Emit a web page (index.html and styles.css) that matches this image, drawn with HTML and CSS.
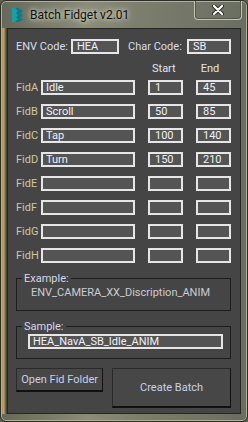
FILE: index.html
```html
<!DOCTYPE html>
<html lang="en">
<head>
  <meta charset="UTF-8">
  <title>Batch Fidget v2.01</title>
  <link rel="stylesheet" href="styles.css">
</head>
<body>
<div class="window">
  <div class="titlebar">
    <svg class="app-icon" width="11" height="14" viewBox="0 0 11 14">
      <path d="M0 0H7L11 3L8.5 5L11 7.5L8.5 9.5L11 11.5L7 14H0Z" fill="#1b9ea6"/>
      <path d="M3 0H7L11 3L8.5 5L11 7.5L8.5 9.5L11 11.5L7 14H3L6 11L4 9.5L6 7.5L4 5L6 3Z" fill="#0f7b84"/>
    </svg>
    <span class="title">Batch Fidget v2.01</span>
    <div class="close">
      <svg width="12" height="10" viewBox="0 0 12 10">
        <path d="M2 1L10 9M10 1L2 9" stroke="#2a2a22" stroke-width="4" stroke-linecap="round"/>
        <path d="M2 1L10 9M10 1L2 9" stroke="#fff" stroke-width="2.2" stroke-linecap="round"/>
      </svg>
    </div>
  </div>

  <div class="panel">
    <div class="codes">
      <span class="lbl env-lbl">ENV Code:</span>
      <div class="field env">HEA</div>
      <span class="lbl char-lbl">Char Code:</span>
      <div class="field char">SB</div>
    </div>

    <div class="heads">
      <span class="head start">Start</span>
      <span class="head end">End</span>
    </div>

    <div class="fids">
      <span class="fid">FidA</span><div class="field name">Idle</div><div class="field num">1</div><div class="field num">45</div>
      <span class="fid">FidB</span><div class="field name">Scroll</div><div class="field num">50</div><div class="field num">85</div>
      <span class="fid">FidC</span><div class="field name">Tap</div><div class="field num">100</div><div class="field num">140</div>
      <span class="fid">FidD</span><div class="field name">Turn</div><div class="field num">150</div><div class="field num">210</div>
      <span class="fid">FidE</span><div class="field name"></div><div class="field num"></div><div class="field num"></div>
      <span class="fid">FidF</span><div class="field name"></div><div class="field num"></div><div class="field num"></div>
      <span class="fid">FidG</span><div class="field name"></div><div class="field num"></div><div class="field num"></div>
      <span class="fid">FidH</span><div class="field name"></div><div class="field num"></div><div class="field num"></div>
    </div>

    <fieldset class="group example">
      <legend>Example:</legend>
      <div class="example-text">ENV_CAMERA_XX_Discription_ANIM</div>
    </fieldset>

    <fieldset class="group sample">
      <legend>Sample:</legend>
      <div class="field sample-field">HEA_NavA_SB_Idle_ANIM</div>
    </fieldset>

    <div class="actions">
      <button class="btn open">Open Fid Folder</button>
      <button class="btn create">Create Batch</button>
    </div>
  </div>
</div>
</body>
</html>
```

FILE: styles.css
```css
html,body {
  margin: 0;
  padding: 0;
  background: #5c5e50;
}
.window {
  width: 248px;
  height: 422px;
  box-sizing: border-box;
  border: 1px solid #2f2f27;
  border-radius: 6px;
  box-shadow: inset 0 0 0 1px #b3ae90;
  background:
    linear-gradient(to right, #6d6540 0, #c0ae70 2px, #8f8150 4px, #4a4636 5px) 0 27px / 6px 386px no-repeat,
    linear-gradient(to right, #66685a 0, #8a8b78 35%, #7a7c6c 60%, #6a6e62 100%);
  display: flex;
  flex-direction: column;
  overflow: hidden;
  font-family: Roboto, "Liberation Sans", sans-serif;
}
.titlebar {
  height: 27px;
  display: flex;
  align-items: flex-start;
  padding-left: 11px;
}
.app-icon {
  margin-top: 7px;
}
.title {
  margin-left: 7px;
  margin-top: 7px;
  font-size: 12px;
  line-height: 15px;
  color: #111;
  white-space: nowrap;
  text-shadow: 0 0 8px rgba(235,235,220,0.9), 0 0 4px rgba(235,235,220,0.9);
}
.close {
  margin-left: auto;
  margin-right: 5px;
  margin-top: -1px;
  width: 48px;
  height: 20px;
  box-sizing: border-box;
  border: 1px solid #c4c3ad;
  border-top: none;
  border-radius: 0 0 4px 4px;
  box-shadow: inset 0 0 0 1px #55574a;
  display: flex;
  align-items: center;
  justify-content: center;
}
.panel {
  margin: 0 6px 7px;
  flex: 1;
  background: #454545;
  border: 1px solid #262622;
  padding: 10px 9px 0 8px;
  color: #dfe3f0;
  font-size: 11px;
  line-height: 13px;
}
.field {
  height: 15px;
  box-sizing: border-box;
  border: 2px solid #e6e6e6;
  background: #545454;
  padding-left: 4px;
  line-height: 11px;
  color: #eef0f8;
  white-space: nowrap;
  overflow: hidden;
}
.codes {
  display: flex;
  align-items: center;
}
.lbl {
  color: #d8dcea;
  white-space: nowrap;
  flex-shrink: 0;
}
.env-lbl {
  width: 55px;
}
.env {
  width: 48px;
  flex-shrink: 0;
}
.char-lbl {
  width: 59px;
  margin-left: 9px;
}
.char {
  width: 44px;
  flex-shrink: 0;
}
.heads {
  height: 18px;
  margin-top: 8px;
  display: flex;
}
.head {
  color: #e4e4e4;
}
.start {
  margin-left: 136px;
}
.end {
  margin-left: 25px;
}
.fids {
  display: grid;
  grid-template-columns: 12px 94px 35px 35px;
  column-gap: 13px;
  grid-auto-rows: 15px;
  row-gap: 9px;
}
.fid {
  color: #cdc6a4;
  margin-top: 1px;
  white-space: nowrap;
}
.name {
  padding-left: 3px;
}
.num {
  padding-left: 5px;
}
.group {
  margin: 9px 0 0;
  padding: 0;
  width: 215px;
  box-sizing: border-box;
  border: 1px solid #1d1d1d;
}
.group legend {
  padding: 0 2px;
  margin-left: 5px;
  color: #d4d8e6;
}
.example {
  height: 39px;
}
.example-text {
  margin-left: 14px;
  margin-top: 1px;
  color: #c9ccd6;
}
.sample {
  height: 39px;
  margin-top: 9px;
}
.sample-field {
  margin: 1px 0 0 11px;
  width: 195px;
  padding-left: 3px;
}
.actions {
  display: flex;
  align-items: flex-start;
  gap: 9px;
  margin-top: 9px;
}
.btn {
  font-family: Roboto, "Liberation Sans", sans-serif;
  font-size: 11px;
  color: #c8d0ea;
  background: #474747;
  border: 1px solid #2a2a2a;
  border-right-color: #111;
  border-bottom: 2px solid #111;
  padding: 0;
}
.open {
  width: 88px;
  height: 24px;
}
.create {
  width: 120px;
  height: 40px;
}
```
